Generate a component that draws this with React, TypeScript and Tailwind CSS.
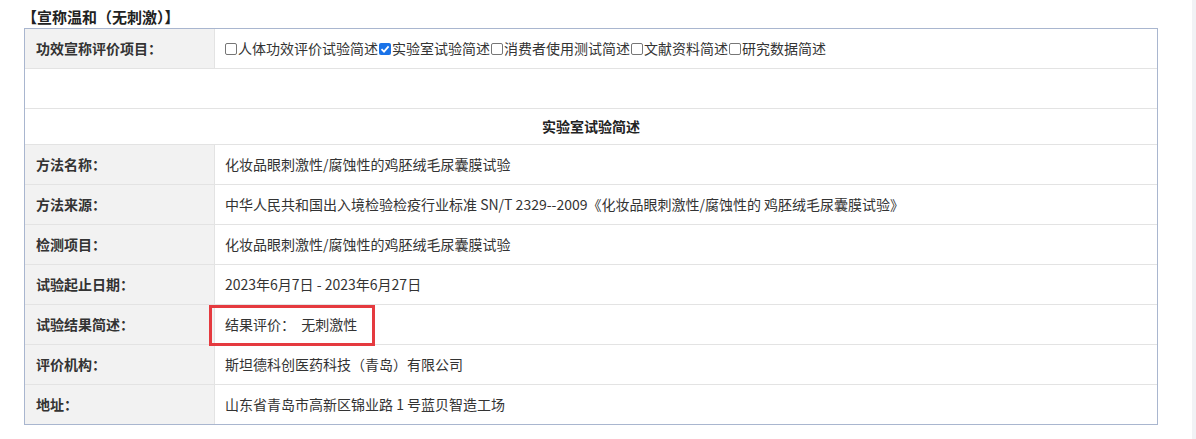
const ROWS = [
  { label: '方法名称：', value: '化妆品眼刺激性/腐蚀性的鸡胚绒毛尿囊膜试验' },
  {
    label: '方法来源：',
    value: '中华人民共和国出入境检验检疫行业标准 SN/T 2329--2009《化妆品眼刺激性/腐蚀性的 鸡胚绒毛尿囊膜试验》',
  },
  { label: '检测项目：', value: '化妆品眼刺激性/腐蚀性的鸡胚绒毛尿囊膜试验' },
  { label: '试验起止日期：', value: '2023年6月7日 - 2023年6月27日' },
  { label: '试验结果简述：', value: '结果评价：  无刺激性', marked: true },
  { label: '评价机构：', value: '斯坦德科创医药科技（青岛）有限公司' },
  { label: '地址：', value: '山东省青岛市高新区锦业路 1 号蓝贝智造工场' },
]

const OPTIONS = [
  { name: '人体功效评价试验简述', checked: false },
  { name: '实验室试验简述', checked: true },
  { name: '消费者使用测试简述', checked: false },
  { name: '文献资料简述', checked: false },
  { name: '研究数据简述', checked: false },
]

function Box({ checked }: { checked: boolean }) {
  if (checked) {
    return (
      <span className="inline-flex w-[12px] h-[12px] mx-[1px] items-center justify-center rounded-[2px] bg-[#1a73e8]">
        <svg width="10" height="10" viewBox="0 0 10 10">
          <path d="M1.5 5.2 L4 7.6 L8.6 2.4" stroke="#fff" strokeWidth="1.8" fill="none" />
        </svg>
      </span>
    )
  }
  return <span className="inline-block w-[12px] h-[12px] mx-[1px] rounded-[2px] border border-[#767676] bg-white" />
}

export default function App() {
  return (
    <div
      className="relative w-[1196px] h-[439px] bg-white text-[#333] overflow-hidden"
      style={{ fontFamily: '"Noto Sans CJK SC", "Microsoft YaHei", sans-serif' }}
    >
      {/* page edge */}
      <div className="absolute right-0 top-0 w-[4px] h-full bg-[#f1f2f5]" />

      {/* Title */}
      <div className="h-[28px] pt-[7px] pl-[22px] text-[15px] leading-[20px] font-bold text-[#222]">
        【宣称温和（无刺激）】
      </div>

      {/* Table */}
      <div className="ml-[24px] w-[1134px] border border-[#a9b6cf] flex flex-col">
        <div className="flex h-[40px] border-b border-[#e3e3e3]">
          <div className="w-[190px] shrink-0 bg-[#f2f2f2] border-r border-[#e3e3e3] pl-[11px] flex items-center text-[14px] font-bold">
            功效宣称评价项目：
          </div>
          <div className="flex-1 pl-[9px] flex items-center text-[14px] whitespace-nowrap">
            {OPTIONS.map((o) => (
              <span key={o.name} className="inline-flex items-center">
                <Box checked={o.checked} />
                {o.name}
              </span>
            ))}
          </div>
        </div>

        <div className="h-[40px] border-b border-[#e3e3e3]" />

        <div className="h-[36px] border-b border-[#e3e3e3] flex items-center justify-center text-[14px] font-bold text-[#222]">
          实验室试验简述
        </div>

        {ROWS.map((r, i) => (
          <div
            key={r.label}
            className={`flex ${i === ROWS.length - 1 ? 'h-[39px]' : 'h-[40px] border-b border-[#e3e3e3]'}`}
          >
            <div className="w-[190px] shrink-0 bg-[#f2f2f2] border-r border-[#e3e3e3] pl-[11px] flex items-center text-[14px] font-bold">
              {r.label}
            </div>
            <div className="relative flex-1 pl-[10px] flex items-center text-[14px] whitespace-pre">
              {r.value}
              {r.marked && (
                <div className="absolute left-[-6px] top-0 w-[166px] h-[41px] border-[3px] border-[#e53a3f]" />
              )}
            </div>
          </div>
        ))}
      </div>
    </div>
  )
}
